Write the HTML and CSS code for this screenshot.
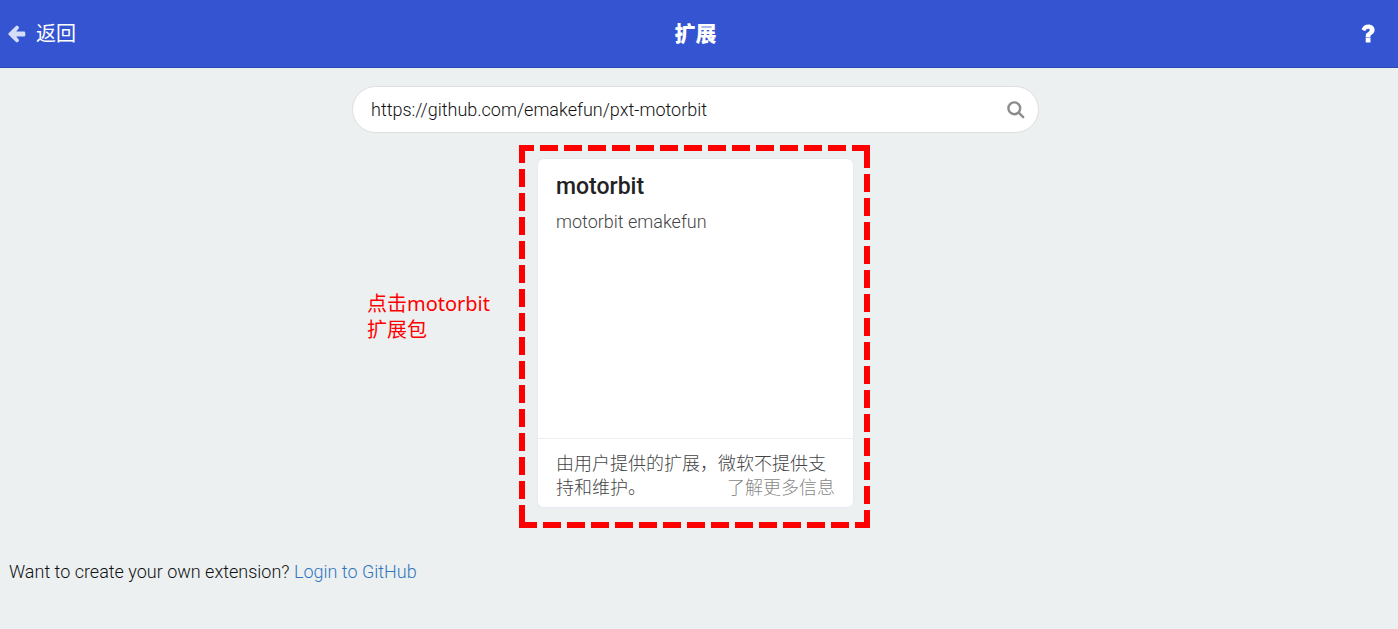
FILE: index.html
```html
<!DOCTYPE html>
<html lang="zh-CN">
<head>
<meta charset="utf-8">
<meta name="viewport" content="width=device-width, initial-scale=1">
<title>扩展</title>
<link rel="stylesheet" href="styles.css">
</head>
<body>
<header class="topbar">
  <button class="back" type="button">
    <svg class="back-icon" viewBox="0 0 18 18" aria-hidden="true"><path d="M0.6 8.3 8 0.9Q8.9 0.1 9.8 0.9L10.7 1.8Q11.5 2.7 10.7 3.6L8.2 6.6H16Q17.3 6.6 17.3 7.9V10.2Q17.3 11.5 16 11.5H8.2L10.7 14.4Q11.5 15.3 10.7 16.2L9.8 17.1Q8.900 17.900 8 17.100L0.600 9.700Q0 9 0.600 8.300Z"/></svg>
    <span>返回</span>
  </button>
  <h1 class="title">扩展</h1>
  <button class="help" type="button" aria-label="帮助">
    <svg class="help-icon" viewBox="0 0 14 20" aria-hidden="true"><path d="M4.7 14.1H9.500V18Q9.500 18.500 9 18.500H5.200Q4.700 18.500 4.700 18ZM0.700 4.900Q2.900 0.600 7.300 0.600C10.800 0.600 13.600 2.800 13.600 6C13.600 8.400 12.400 9.400 10.900 10.400C9.800 11.100 9.500 11.400 9.500 12.300V13.400H4.700V11.600C4.700 9.700 5.900 8.800 7.300 7.900C8.300 7.300 8.700 6.900 8.700 6.100C8.700 5.300 8 4.800 7.100 4.800C5.900 4.800 5.200 5.500 4.300 6.800Q4 7.200 3.600 6.900L0.900 5.600Q0.500 5.300 0.700 4.900Z"/></svg>
  </button>
</header>
<main class="page">
  <form class="search" role="search">
    <input class="search-input" type="text" aria-label="搜索扩展" value="https://github.com/emakefun/pxt-motorbit">
    <button class="search-button" type="submit" aria-label="搜索">
      <svg class="search-icon" viewBox="0 0 18 18" aria-hidden="true"><circle cx="7.300" cy="7.300" r="5.900"/><path d="M11.700 11.700 16.200 16.200"/></svg>
    </button>
  </form>
  <section class="results">
    <p class="note">点击motorbit<br>扩展包</p>
    <div class="highlight">
      <svg class="dashes" viewBox="0 0 351 383" aria-hidden="true">
        <path d="M-3 3H351M348 5V383M3 0V383M0 380H351"/>
      </svg>
      <article class="card">
        <div class="card-body">
          <h2 class="card-title">motorbit</h2>
          <p class="card-text">motorbit emakefun</p>
        </div>
        <footer class="card-footer">由用户提供的扩展，微软不提供支持和维护。<a class="more" href="#more">了解更多信息</a></footer>
      </article>
    </div>
  </section>
  <p class="login">Want to create your own extension? <a class="login-link" href="#login">Login to GitHub</a></p>
</main>
</body>
</html>
```
FILE: styles.css
```css
* {
  box-sizing: border-box;
}

body {
  margin: 0;
  background: #ecf0f1;
  color: #222;
  font: 300 18px/24px Roboto, "Noto Sans CJK SC", sans-serif;
}

h1, h2, p {
  margin: 0;
}

a {
  text-decoration: none;
}

button {
  padding: 0;
  border: 0;
  background: none;
  color: inherit;
  font: inherit;
  cursor: pointer;
}

.topbar {
  display: grid;
  grid-template-columns: 1fr auto 1fr;
  align-items: center;
  height: 68px;
  padding: 0 15px 0 8px;
  border-bottom: 1px solid #2c4ab4;
  background: #3454d1;
  color: #fff;
}

.back {
  display: flex;
  align-items: center;
  justify-self: start;
  gap: 10px;
  font-size: 20px;
  font-weight: 400;
}

.back-icon {
  width: 18px;
  height: 18px;
  fill: #d6ddf6;
}

.title {
  font-size: 21px;
  font-weight: 900;
  line-height: 24px;
}

.help {
  justify-self: end;
  margin-right: 8px;
}

.help-icon {
  display: block;
  width: 14px;
  height: 20px;
  fill: #fff;
}

.page {
  padding: 18px 7px 0 0;
}

.search {
  display: flex;
  align-items: center;
  width: 50%;
  min-width: 320px;
  max-width: 687px;
  height: 47px;
  margin: 0 auto;
  padding: 0 13px 0 18px;
  border: 1px solid #dedede;
  border-radius: 24px;
  background: #fff;
}

.search-input {
  flex: 1;
  min-width: 0;
  padding: 0;
  border: 0;
  outline: 0;
  background: none;
  color: #111;
  font: inherit;
}

.search-icon {
  display: block;
  width: 18px;
  height: 18px;
  fill: none;
  stroke: #8c8c8c;
  stroke-width: 2.400;
  stroke-linecap: round;
}

.results {
  display: grid;
  grid-template-columns: 1fr auto 1fr;
  align-items: center;
  margin: 12px 2px 0 0;
}

.note {
  justify-self: end;
  margin: 0 29px 40px 0;
  color: #f00;
  font: 20px/26px "Noto Sans", "Noto Sans CJK SC", sans-serif;
}

.highlight {
  position: relative;
  padding: 14px 17px 21px 19px;
}

.dashes {
  position: absolute;
  inset: 0;
  width: 100%;
  height: 100%;
  fill: none;
  stroke: #f00;
  stroke-width: 6;
  stroke-dasharray: 18 6;
  pointer-events: none;
}

.card {
  display: flex;
  flex-direction: column;
  width: 315px;
  min-height: 348px;
  border-radius: 6px;
  background: #fff;
  box-shadow: 0 0 1px 1px #e6ecf2;
}

.card-body {
  flex: 1;
  padding: 16px 18px;
}

.card-title {
  font-size: 23px;
  font-weight: 500;
  line-height: 24px;
}

.card-text {
  margin-top: 11px;
  color: #444;
}

.card-footer {
  padding: 13px 18px 7px;
  border-top: 1px solid #eee;
  color: #444;
}

.more {
  float: right;
  color: #888;
}

.login {
  margin: 32px 9px 0;
  color: #111;
}

.login-link {
  color: #2f76bd;
}
```
